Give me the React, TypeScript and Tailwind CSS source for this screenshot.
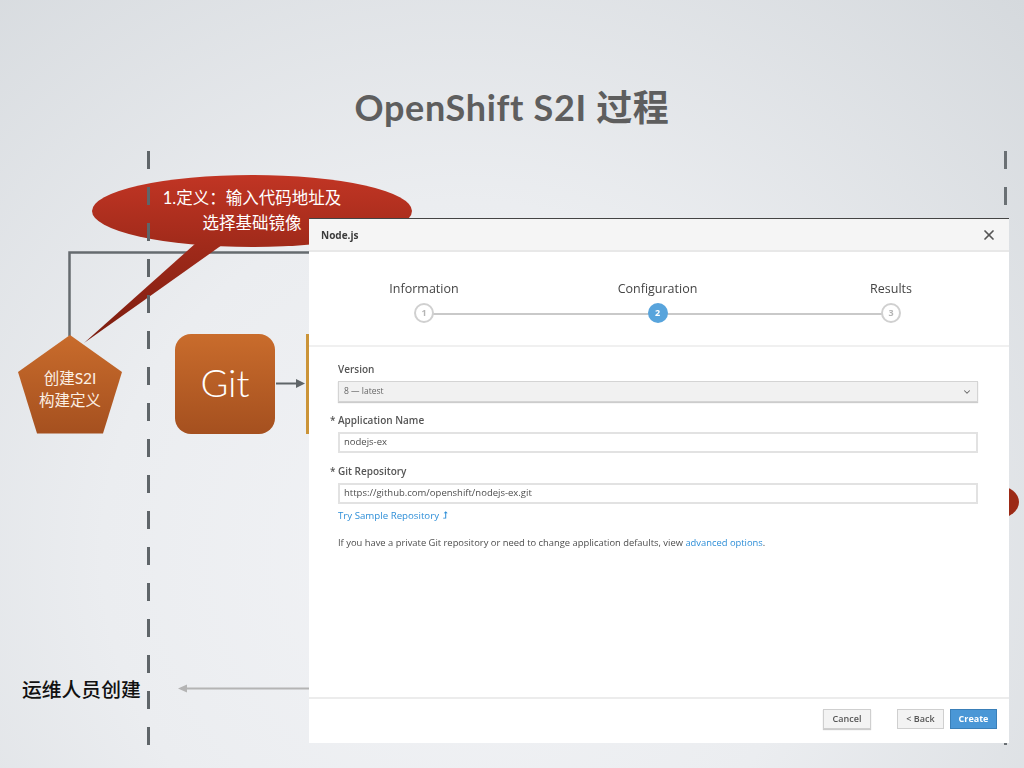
import { ChevronDown, X } from "lucide-react";

const dashes = Array.from({ length: 17 });

function Callout() {
  return (
    <svg className="absolute left-0 top-0" width="1024" height="768" viewBox="0 0 1024 768">
      <defs>
        <linearGradient id="red" gradientUnits="userSpaceOnUse" x1="0" y1="175" x2="0" y2="345">
          <stop offset="0" stopColor="#c13524" />
          <stop offset="0.42" stopColor="#a02a1a" />
          <stop offset="1" stopColor="#7a1c0e" />
        </linearGradient>
        <linearGradient id="orange" gradientUnits="userSpaceOnUse" x1="0" y1="334" x2="0" y2="434">
          <stop offset="0" stopColor="#c96c2c" />
          <stop offset="1" stopColor="#a5501f" />
        </linearGradient>
      </defs>
      {/* connector lines */}
      <path d="M69.5 336V252.5H310" fill="none" stroke="#656b6f" strokeWidth="2.5" />
      <path d="M276 383.5H297" stroke="#5f6568" strokeWidth="2" />
      <path d="M296 379L305 383.5L296 388Z" fill="#5f6568" />
      <path d="M178 688.5L187 684.5V687.5H310V689.5H187V692.5Z" fill="#b4b4b4" />
      {/* speech bubble */}
      <ellipse cx="252" cy="211" rx="160" ry="36" fill="url(#red)" />
      <path d="M196 243L222 245L84 343Z" fill="url(#red)" />
      <ellipse cx="999" cy="502" rx="20" ry="16" fill="#9c2a16" />
      {/* pentagon */}
      <path d="M70 335L122 372L103 433.5H37L18 372Z" fill="url(#orange)" />
    </svg>
  );
}

function Step({ label, num, active }: { label: string; num: number; active?: boolean }) {
  return (
    <div className="flex w-[120px] flex-col items-center">
      <span className="text-[12.5px] leading-[18px] text-[#444]">{label}</span>
      <span
        className={
          active
            ? "relative mt-[5px] flex h-[20px] w-[20px] items-center justify-center rounded-full bg-[#58a4dc] text-[9px] font-bold text-white"
            : "relative mt-[5px] flex h-[20px] w-[20px] items-center justify-center rounded-full border-2 border-[#d0d0d0] bg-white text-[9px] font-bold text-[#b5b5b5]"
        }
      >
        {num}
      </span>
    </div>
  );
}

function Field({ label, value }: { label: string; value: string }) {
  return (
    <div className="mt-[11px]">
      <div className="relative text-[10px] font-semibold leading-[14px] text-[#555]">
        <span className="absolute left-[-8px]">*</span>
        {label}
      </div>
      <div className="mt-[5px] flex h-[21px] items-center border-2 border-[#e2e2e2] bg-white pl-[4px] text-[9.5px] text-[#4d4d4d]">
        {value}
      </div>
    </div>
  );
}

function Modal() {
  return (
    <div className="absolute left-[309px] top-[218px] flex h-[525px] w-[700px] flex-col bg-white font-['Open_Sans',sans-serif] blur-[0.5px]">
      <div className="flex h-[34px] items-center justify-between border-t border-b-2 border-t-[#444] border-b-[#e8e8e8] bg-[#f5f5f5] pl-[12px] pr-[12px] pt-[1px]">
        <span className="text-[10px] font-bold text-[#3c3c3c]">Node.js</span>
        <X size={16} strokeWidth={2.6} className="text-[#555]" />
      </div>

      <div className="relative flex h-[95px] items-start justify-between border-b-2 border-[#f0f0f0] pl-[55px] pr-[58px] pt-[28px]">
        <div className="absolute left-[115px] right-[118px] top-[61px] h-[2px] bg-[#c9c9c9]" />
        <Step label="Information" num={1} />
        <Step label="Configuration" num={2} active />
        <Step label="Results" num={3} />
      </div>

      <div className="pl-[29px] pr-[31px] pt-[15px]">
        <div className="text-[10px] font-semibold leading-[14px] text-[#555]">Version</div>
        <div className="mt-[5px] flex h-[21px] items-center justify-between border border-[#d4d4d4] bg-[#f1f1f1] pl-[5px] pr-[5px] text-[8.5px] text-[#666] shadow-[0_1px_1px_#ccc]">
          <span>8 — latest</span>
          <ChevronDown size={10} strokeWidth={2.5} className="text-[#666]" />
        </div>
        <Field label="Application Name" value="nodejs-ex" />
        <Field label="Git Repository" value="https://github.com/openshift/nodejs-ex.git" />
        <div className="mt-[5px] text-[9.7px] font-medium leading-[14px] text-[#2f8fd8]">Try Sample Repository ⮥</div>
        <div className="mt-[13px] text-[9.4px] leading-[14px] text-[#4d4d4d]">
          If you have a private Git repository or need to change application defaults, view{" "}
          <span className="text-[#2f8fd8]">advanced options</span>.
        </div>
      </div>

      <div className="mt-auto flex h-[46px] items-start border-t-2 border-[#ececec] pl-[514px] pr-[12px] pt-[10px]">
        <div className="flex h-[20px] w-[48px] items-center justify-center border border-[#cfcfcf] bg-[#f3f3f3] text-[9px] font-semibold text-[#555] shadow-[0_1px_1px_#ccc]">
          Cancel
        </div>
        <div className="ml-[26px] flex h-[20px] w-[47px] items-center justify-center border border-[#cfcfcf] bg-[#f3f3f3] text-[9px] font-semibold text-[#555]">
          &lt; Back
        </div>
        <div className="ml-[6px] flex h-[20px] w-[47px] items-center justify-center border border-[#3a7fb8] bg-[#4a97d6] text-[9px] font-bold text-white">
          Create
        </div>
      </div>
    </div>
  );
}

export default function App() {
  return (
    <div className="relative h-[768px] w-[1024px] overflow-hidden bg-[radial-gradient(ellipse_at_45%_72%,#f2f3f6_0%,#ebedf0_45%,#d5d9dd_100%)] font-['Lato','Noto_Sans_CJK_SC',sans-serif]">
      <div className="absolute left-0 right-0 top-[84px] text-center text-[36px] font-bold leading-[46px] tracking-[0.65px] text-[#5e5e5e]">
        OpenShift S2I 过程
      </div>

      <Callout />

      {/* dashed lanes */}
      <div className="absolute left-[147px] top-[151px] flex flex-col gap-[18px]">
        {dashes.map((_, i) => (
          <div key={i} className="h-[18px] w-[3px] bg-[#5f6569]" />
        ))}
      </div>
      <div className="absolute left-[1004px] top-[151px] flex flex-col gap-[18px]">
        {dashes.map((_, i) => (
          <div key={i} className="h-[18px] w-[3px] bg-[#6a7074]" />
        ))}
      </div>

      <div className="absolute left-[92px] top-[186px] w-[320px] text-center text-[16.5px] leading-[25px] text-white">
        <div>1.定义：输入代码地址及</div>
        <div>选择基础镜像</div>
      </div>

      <div className="absolute left-[18px] top-[367px] w-[104px] text-center text-[15.5px] leading-[22px] text-[#fbefe4]">
        <div>创建S2I</div>
        <div>构建定义</div>
      </div>

      <div className="absolute left-[175px] top-[334px] flex h-[100px] w-[100px] items-center justify-center rounded-[16px] bg-gradient-to-b from-[#c96c2c] to-[#a5501f] pb-[4px] text-[38px] font-light text-white">
        Git
      </div>

      <div className="absolute left-[306px] top-[334px] h-[100px] w-[3px] bg-[#cb9438]" />

      <div className="absolute left-[22px] top-[675px] text-[19.8px] font-medium leading-[28px] text-[#111]">
        运维人员创建
      </div>

      <Modal />
    </div>
  );
}
